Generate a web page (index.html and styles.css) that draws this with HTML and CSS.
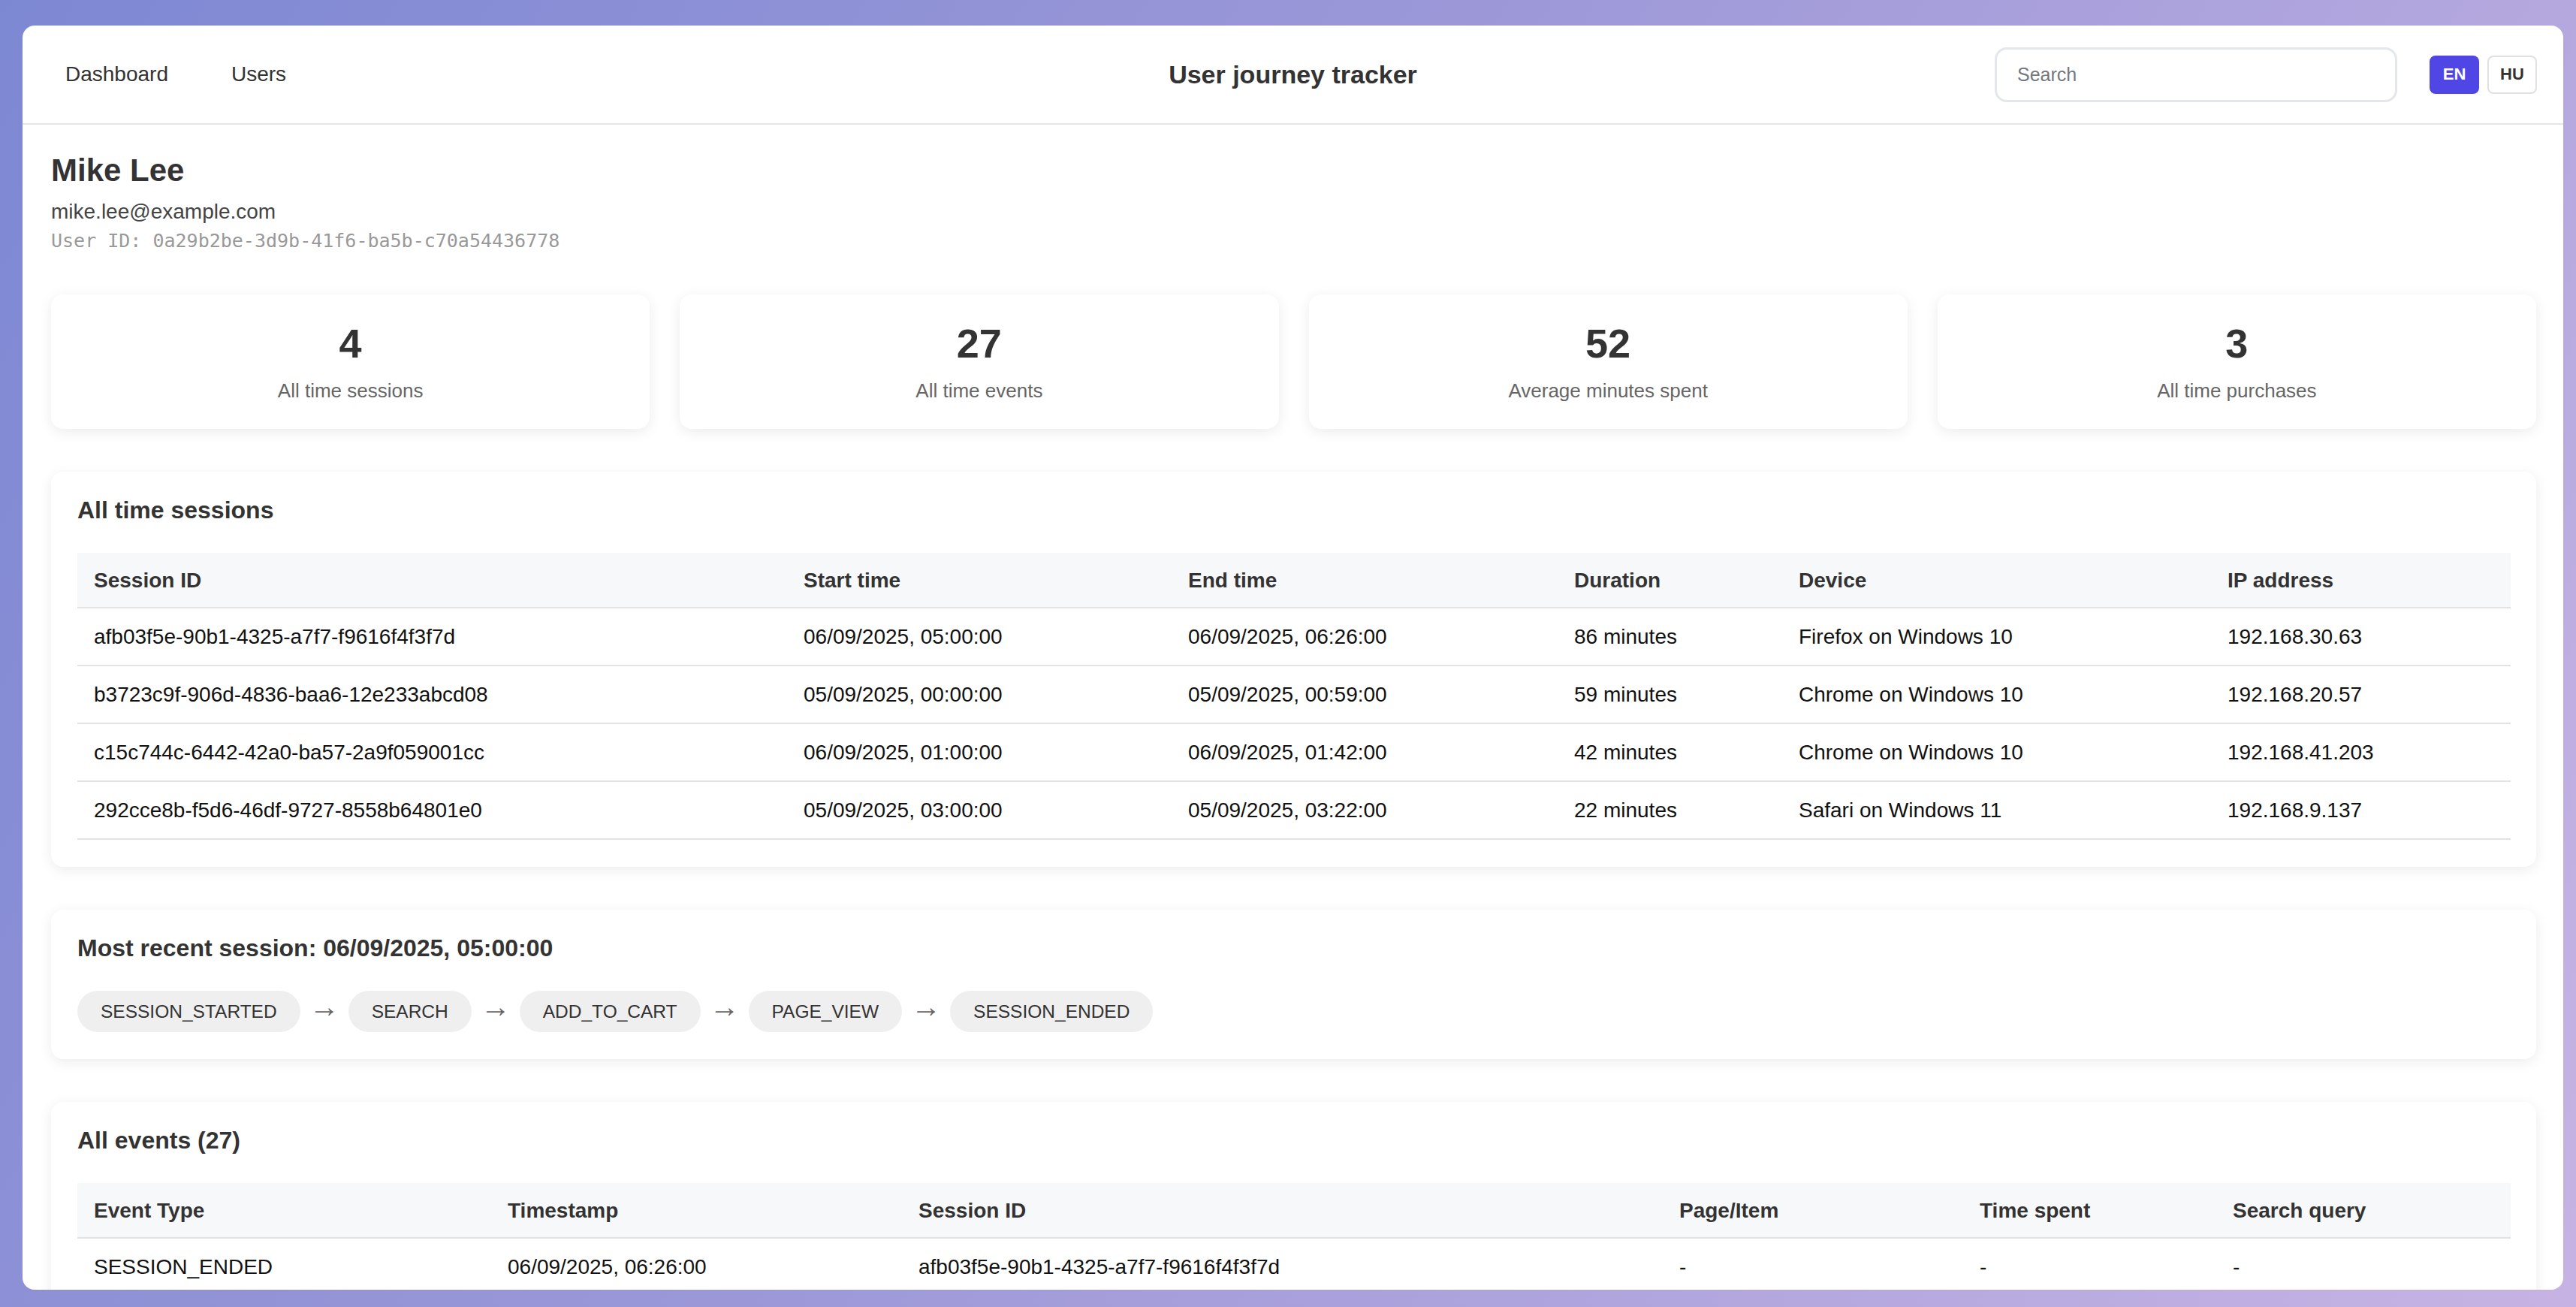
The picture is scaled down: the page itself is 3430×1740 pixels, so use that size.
FILE: index.html
```html
<!DOCTYPE html>
<html lang="en">
<head>
<meta charset="utf-8">
<title>User journey tracker</title>
<link rel="stylesheet" href="styles.css">
</head>
<body>
<div class="app">
  <header class="topbar">
    <nav class="nav">
      <a class="nav-link" href="#">Dashboard</a>
      <a class="nav-link" href="#">Users</a>
    </nav>
    <div class="brand">User journey tracker</div>
    <div class="tools">
      <input class="search" type="text" placeholder="Search">
      <div class="lang">
        <button class="lang-btn active">EN</button>
        <button class="lang-btn">HU</button>
      </div>
    </div>
  </header>
  <main class="main">
    <section class="profile">
      <h1 class="name">Mike Lee</h1>
      <div class="email">mike.lee@example.com</div>
      <div class="uid">User ID: 0a29b2be-3d9b-41f6-ba5b-c70a54436778</div>
    </section>

    <section class="stats">
      <div class="stat card"><div class="stat-num">4</div><div class="stat-label">All time sessions</div></div>
      <div class="stat card"><div class="stat-num">27</div><div class="stat-label">All time events</div></div>
      <div class="stat card"><div class="stat-num">52</div><div class="stat-label">Average minutes spent</div></div>
      <div class="stat card"><div class="stat-num">3</div><div class="stat-label">All time purchases</div></div>
    </section>

    <section class="panel card">
      <h2 class="panel-title">All time sessions</h2>
      <table class="table">
        <colgroup>
          <col class="s1"><col class="s2"><col class="s3"><col class="s4"><col class="s5"><col class="s6">
        </colgroup>
        <thead>
          <tr><th>Session ID</th><th>Start time</th><th>End time</th><th>Duration</th><th>Device</th><th>IP address</th></tr>
        </thead>
        <tbody>
          <tr><td>afb03f5e-90b1-4325-a7f7-f9616f4f3f7d</td><td>06/09/2025, 05:00:00</td><td>06/09/2025, 06:26:00</td><td>86 minutes</td><td>Firefox on Windows 10</td><td>192.168.30.63</td></tr>
          <tr><td>b3723c9f-906d-4836-baa6-12e233abcd08</td><td>05/09/2025, 00:00:00</td><td>05/09/2025, 00:59:00</td><td>59 minutes</td><td>Chrome on Windows 10</td><td>192.168.20.57</td></tr>
          <tr><td>c15c744c-6442-42a0-ba57-2a9f059001cc</td><td>06/09/2025, 01:00:00</td><td>06/09/2025, 01:42:00</td><td>42 minutes</td><td>Chrome on Windows 10</td><td>192.168.41.203</td></tr>
          <tr><td>292cce8b-f5d6-46df-9727-8558b64801e0</td><td>05/09/2025, 03:00:00</td><td>05/09/2025, 03:22:00</td><td>22 minutes</td><td>Safari on Windows 11</td><td>192.168.9.137</td></tr>
        </tbody>
      </table>
    </section>

    <section class="panel card">
      <h2 class="panel-title">Most recent session: 06/09/2025, 05:00:00</h2>
      <div class="journey">
        <span class="chip">SESSION_STARTED</span><span class="arrow">→</span>
        <span class="chip">SEARCH</span><span class="arrow">→</span>
        <span class="chip">ADD_TO_CART</span><span class="arrow">→</span>
        <span class="chip">PAGE_VIEW</span><span class="arrow">→</span>
        <span class="chip">SESSION_ENDED</span>
      </div>
    </section>

    <section class="panel card">
      <h2 class="panel-title">All events (27)</h2>
      <table class="table">
        <colgroup>
          <col class="e1"><col class="e2"><col class="e3"><col class="e4"><col class="e5"><col class="e6">
        </colgroup>
        <thead>
          <tr><th>Event Type</th><th>Timestamp</th><th>Session ID</th><th>Page/Item</th><th>Time spent</th><th>Search query</th></tr>
        </thead>
        <tbody>
          <tr><td>SESSION_ENDED</td><td>06/09/2025, 06:26:00</td><td>afb03f5e-90b1-4325-a7f7-f9616f4f3f7d</td><td>-</td><td>-</td><td>-</td></tr>
          <tr><td>PAGE_VIEW</td><td>06/09/2025, 06:10:00</td><td>afb03f5e-90b1-4325-a7f7-f9616f4f3f7d</td><td>/checkout</td><td>16 minutes</td><td>-</td></tr>
          <tr><td>ADD_TO_CART</td><td>06/09/2025, 05:40:00</td><td>afb03f5e-90b1-4325-a7f7-f9616f4f3f7d</td><td>Wireless Mouse</td><td>-</td><td>-</td></tr>
        </tbody>
      </table>
    </section>
  </main>
</div>
</body>
</html>
```
FILE: styles.css
```css
* { box-sizing: border-box; }

html, body { height: 100%; }

body {
  margin: 0;
  padding: 34px 17px 23px 30px;
  background: linear-gradient(120deg, #7d88d3 0%, #9c98d8 45%, #c6b3e3 100%);
  font-family: "Liberation Sans", Arial, Helvetica, sans-serif;
  color: #333;
}

.app {
  height: 100%;
  background: #fff;
  border-radius: 16px;
  overflow: hidden;
  display: flex;
  flex-direction: column;
}

/* top bar */
.topbar {
  flex: 0 0 132px;
  display: grid;
  grid-template-columns: 1fr auto 1fr;
  align-items: center;
  padding: 0 35px;
  border-bottom: 2px solid #e5e5e5;
}

.nav { display: flex; gap: 40px; }

.nav-link {
  padding: 0 22px;
  font-size: 28px;
  color: #333;
  text-decoration: none;
}

.brand {
  font-size: 34px;
  font-weight: 700;
  color: #333;
}

.tools {
  display: flex;
  align-items: center;
  justify-content: flex-end;
  gap: 43px;
}

.search {
  width: 536px;
  height: 73px;
  border: 3px solid #e3e6eb;
  border-radius: 16px;
  padding: 0 27px;
  font-family: inherit;
  font-size: 25px;
  color: #333;
  outline: none;
}
.search::placeholder { color: #737880; }

.lang { display: flex; gap: 11px; }

.lang-btn {
  width: 66px;
  height: 51px;
  border: 2px solid #e0e0e0;
  border-radius: 8px;
  background: #fff;
  color: #333;
  font-family: inherit;
  font-size: 22px;
  font-weight: 700;
  padding: 0;
}
.lang-btn.active {
  background: #4f46e5;
  border-color: #4f46e5;
  color: #fff;
}

/* main */
.main {
  flex: 1;
  padding: 37px 36px 40px 38px;
  display: flex;
  flex-direction: column;
  gap: 57px;
}

.name {
  margin: 0 0 15px;
  font-size: 42px;
  line-height: 48px;
  font-weight: 700;
  color: #333;
}

.email {
  font-size: 28px;
  line-height: 32px;
  color: #444;
}

.uid {
  margin-top: 8px;
  font-family: "DejaVu Sans Mono", "Liberation Mono", monospace;
  font-size: 25px;
  line-height: 29px;
  color: #999;
}

.card {
  background: #fff;
  border-radius: 16px;
  box-shadow: 0 4px 18px rgba(0, 0, 0, 0.08);
}

.stats {
  display: grid;
  grid-template-columns: repeat(4, 1fr);
  gap: 40px;
}

.stat {
  height: 179px;
  padding-top: 34px;
  text-align: center;
}

.stat-num {
  font-size: 54px;
  line-height: 62px;
  font-weight: 700;
  color: #333;
}

.stat-label {
  margin-top: 17px;
  font-size: 26px;
  line-height: 30px;
  color: #666;
}

.panel {
  padding: 33px 35px 36px;
}

.panel-title {
  margin: 0 0 38px;
  font-size: 32px;
  line-height: 37px;
  font-weight: 700;
  color: #333;
}

/* tables */
.table {
  width: 100%;
  border-collapse: collapse;
  table-layout: fixed;
}

.table th,
.table td {
  padding: 21px 22px;
  font-size: 28px;
  line-height: 33px;
  text-align: left;
  border-bottom: 2px solid #e3e3e3;
  white-space: nowrap;
}

.table th {
  background: #f7f8fa;
  font-weight: 700;
  color: #333;
  padding-top: 20px;
  padding-bottom: 19px;
}

.table td { color: #111; }

.s1 { width: 945px; }
.s2 { width: 512px; }
.s3 { width: 514px; }
.s4 { width: 299px; }
.s5 { width: 571px; }
.s6 { width: 399px; }

.e1 { width: 551px; }
.e2 { width: 547px; }
.e3 { width: 1013px; }
.e4 { width: 400px; }
.e5 { width: 337px; }
.e6 { width: 392px; }

/* journey */
.journey {
  display: flex;
  align-items: center;
  gap: 18px;
}

.chip {
  height: 55px;
  line-height: 55px;
  padding: 0 31px;
  border-radius: 28px;
  background: #efefef;
  font-size: 24.5px;
  color: #333;
}

.arrow {
  margin: 0 -6px;
  font-family: "Liberation Sans", sans-serif;
  font-size: 40px;
  line-height: 1;
  padding-bottom: 14px;
  color: #666;
}
```
